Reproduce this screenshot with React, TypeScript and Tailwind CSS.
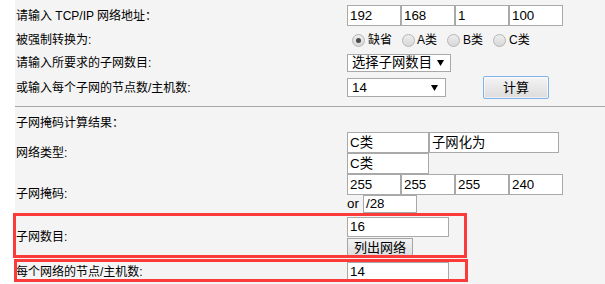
import React from "react";

const FONT = { fontFamily: '"Liberation Sans", "Noto Sans CJK SC", sans-serif' };

function Box({ w, h, text }: { w: number; h: number; text?: string }) {
  return (
    <div
      className="flex items-center border border-[#a9a9a9] bg-white pl-[2px] text-[13.33px] leading-none text-black overflow-hidden whitespace-nowrap"
      style={{ width: w, height: h }}
    >
      {text}
    </div>
  );
}

function Radio({ checked }: { checked?: boolean }) {
  return (
    <span className="relative inline-flex h-[13px] w-[13px] shrink-0 items-center justify-center rounded-full border border-[#b5b5b5] bg-gradient-to-b from-[#ededed] to-[#d8d8d8]">
      {checked && <span className="h-[5px] w-[5px] rounded-full bg-[#4a4a4a]" />}
    </span>
  );
}

function Arrow() {
  return (
    <svg width="7" height="6" viewBox="0 0 7 6" className="shrink-0">
      <path d="M0 0 L7 0 L3.5 6 Z" fill="#000" />
    </svg>
  );
}

function Row({ h, children, label, className = "" }: { h: number; children?: React.ReactNode; label?: React.ReactNode; className?: string }) {
  return (
    <div className={`flex ${className}`} style={{ height: h }}>
      <div className="flex w-[332px] items-center pl-[1px] text-[12px] text-black">{label}</div>
      <div className="flex flex-col">{children}</div>
    </div>
  );
}

export default function App() {
  return (
    <div className="relative h-[284px] w-[605px] overflow-hidden bg-white" style={FONT}>
      <div className="ml-[15px] h-full bg-[#f4f4f4] pt-[5px]">
        <Row h={21} label="请输入 TCP/IP 网络地址：">
          <div className="flex">
            <Box w={54} h={21} text="192" />
            <Box w={54} h={21} text="168" />
            <Box w={54} h={21} text="1" />
            <Box w={54} h={21} text="100" />
          </div>
        </Row>
        <Row h={28} label="被强制转换为:">
          <div className="flex h-full items-center pl-[5px] text-[12px] text-black">
            <Radio checked />
            <span className="ml-[3px] mr-[10px]">缺省</span>
            <Radio />
            <span className="ml-[2px] mr-[10px]">A类</span>
            <Radio />
            <span className="ml-[3px] mr-[10px]">B类</span>
            <Radio />
            <span className="ml-[3px]">C类</span>
          </div>
        </Row>
        <Row h={18} label="请输入所要求的子网数目:">
          <div className="flex h-[18px] w-[104px] items-center justify-between border border-[#a9a9a9] bg-white pl-[4px] pr-[6px] text-[13.33px] leading-none text-black">
            <span>选择子网数目</span>
            <Arrow />
          </div>
        </Row>
        <Row h={23} className="mt-[4px]" label="或输入每个子网的节点数/主机数:">
          <div className="flex h-full items-center">
            <div className="flex h-[19px] w-[99px] items-center justify-between border border-[#a9a9a9] bg-white pl-[4px] pr-[7px] text-[13.33px] leading-none text-black">
              <span>14</span>
              <Arrow />
            </div>
            <div className="ml-[37px] flex h-[23px] w-[66px] items-center justify-center rounded-[2px] border border-[#7eb4ea] bg-gradient-to-b from-[#f4f4f4] to-[#dcdcdc] text-[13px] text-black shadow-[inset_0_0_0_1px_rgba(255,255,255,0.6)]">
              计算
            </div>
          </div>
        </Row>
        <div className="mt-[7px] h-[1px] bg-[#a5a5a5]" />
        <div className="h-[25px] pl-[1px] pt-[10px] text-[12px] leading-[12px] text-black">子网掩码计算结果：</div>
        <Row h={42} label="网络类型:">
          <div className="flex">
            <Box w={82} h={21} text="C类" />
            <Box w={130} h={21} text="子网化为" />
          </div>
          <Box w={82} h={21} text="C类" />
        </Row>
        <Row h={39} label="子网掩码:">
          <div className="flex">
            <Box w={54} h={21} text="255" />
            <Box w={54} h={21} text="255" />
            <Box w={54} h={21} text="255" />
            <Box w={54} h={21} text="240" />
          </div>
          <div className="flex h-[18px] items-center text-[13.33px] leading-none text-black">
            <span className="w-[16px]">or</span>
            <Box w={54} h={18} text="/28" />
          </div>
        </Row>
        <Row h={40} className="mt-[4px]" label="子网数目:">
          <Box w={102} h={20} text="16" />
          <div className="mt-[1px] flex h-[19px] w-[66px] items-center justify-center border border-[#a5a5a5] bg-gradient-to-b from-[#f3f3f3] to-[#dddddd] text-[13px] leading-none text-black">
            列出网络
          </div>
        </Row>
        <Row h={19} className="mt-[5px]" label="每个网络的节点/主机数:">
          <Box w={102} h={19} text="14" />
        </Row>
      </div>
      <div className="pointer-events-none absolute left-[13px] top-[213px] h-[45px] w-[454px] border-[3px] border-[#fb3a3a]" />
      <div className="pointer-events-none absolute left-[14px] top-[259px] h-[23px] w-[454px] border-[3px] border-[#fb3a3a]" />
    </div>
  );
}
